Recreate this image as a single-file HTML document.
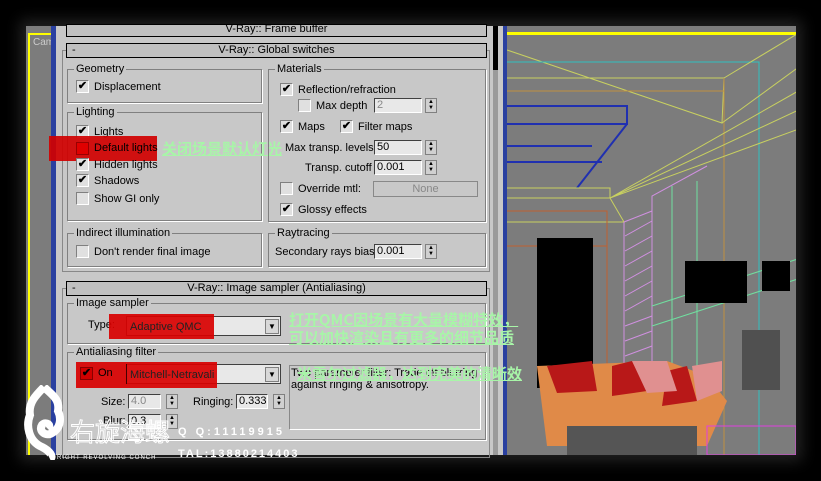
<!DOCTYPE html>
<html><head><meta charset="utf-8"><style>
*{margin:0;padding:0;box-sizing:border-box}
body{width:821px;height:481px;background:#000;position:relative;overflow:hidden;font-family:"Liberation Sans","Noto Sans CJK SC",sans-serif;font-size:11px;color:#000}
.a{position:absolute}
.grp{position:absolute;border:1px solid #808080;box-shadow:1px 1px 0 #fff}
.lbl{position:absolute;background:#c8c8c8;padding:0 2px;font-size:11px;top:-8px;left:6px;line-height:14px}
.t{position:absolute;font-size:11px;line-height:14px;white-space:nowrap}
.cb{position:absolute;width:13px;height:13px;background:#e0e0e0;border:1px solid;border-color:#808080 #fff #fff #808080;font-size:11px;line-height:11px;text-align:center;font-weight:bold}
.in{position:absolute;height:15px;background:#e8e8e8;border:1px solid;border-color:#404040 #fff #fff #404040;font-size:11px;line-height:13px;padding-left:2px}
.sp{position:absolute;width:12px;height:15px;background:#d0d0d0;border:1px solid #808080;font-size:6px;line-height:6px;text-align:center}
.hdr{position:absolute;left:66px;width:421px;height:15px;background:#c0c0c0;border:1px solid #000;font-size:11px;line-height:13px;text-align:center}
.cn{position:absolute;color:#a8f5a8;font-weight:bold;font-size:15px;line-height:16px;text-decoration:underline;white-space:nowrap;font-family:"Noto Sans CJK SC",sans-serif}
</style></head><body>
<div class="a" style="left:26px;top:26px;width:770px;height:429px;background:#7c7c7c;box-shadow:0 0 14px 6px #222"></div>
<div class="a" style="left:28px;top:33px;width:24px;height:422px;border-left:2px solid #ff0;border-top:2px solid #ff0"></div>
<div class="t" style="left:33px;top:36px;color:#ccc;font-size:10px">Cam</div>
<div class="a" style="left:51px;top:26px;width:5px;height:429px;background:#2a40a0"></div>
<div class="a" style="left:503px;top:26px;width:4px;height:429px;background:#2a40a0"></div>
<svg class="a" style="left:507px;top:26px" width="289" height="429">
<rect x="0" y="6" width="289" height="3" fill="#ff0"/>
<g fill="none" stroke-width="1">
<path d="M0 24 L215 97 L217 52 L0 52" stroke="#c8d060"/>
<path d="M0 36 L252 36 L252 429" stroke="#30c0c0"/>
<path d="M0 65 L217 65 M217 52 L217 429" stroke="#c09040"/>
<path d="M0 80 L120 80 L120 98 L0 98 M120 98 L70 162 M0 120 L85 120 M0 136 L95 136" stroke="#2030b0" stroke-width="2"/>
<path d="M215 97 L300 35 M217 52 L300 2 M103 172 L300 60 M103 172 L300 80 M103 172 L300 100 M0 162 L103 162 L103 172 L0 172 M103 172 L117 196 L0 196" stroke="#c8d060"/>
<path d="M0 185 L100 185 L100 420 M0 220 L100 220" stroke="#c06030"/>
<path d="M117 196 L117 350 L145 350 L145 170 L200 140 M145 170 L145 350 M145 185 L117 196" stroke="#d090e0"/>
<path d="M145 280 L300 230 M145 300 L300 250 M165 160 L165 400 M190 155 L190 350" stroke="#70e0a0"/>
</g>
<g stroke="#d090e0">
<line x1="118" y1="210" x2="145" y2="195"/><line x1="118" y1="225" x2="145" y2="210"/><line x1="118" y1="240" x2="145" y2="225"/><line x1="118" y1="255" x2="145" y2="240"/><line x1="118" y1="270" x2="145" y2="255"/><line x1="118" y1="285" x2="145" y2="270"/><line x1="118" y1="300" x2="145" y2="290"/><line x1="118" y1="315" x2="145" y2="305"/><line x1="118" y1="330" x2="145" y2="320"/></g>
<rect x="30" y="212" width="56" height="150" fill="#000"/>
<rect x="178" y="235" width="62" height="42" fill="#000"/>
<rect x="255" y="235" width="28" height="30" fill="#000"/>
<rect x="235" y="304" width="38" height="60" fill="#505050"/>
<path d="M30 340 L160 335 L200 350 L220 375 L200 420 L40 420 Z" fill="#e08a48"/>
<path d="M40 340 L85 335 L90 365 L50 367Z M105 340 L125 335 L140 365 L105 370 Z M160 345 L180 340 L190 375 L155 380Z" fill="#b81818"/>
<path d="M125 335 L160 335 L170 365 L140 367 Z M185 340 L215 335 L215 365 L190 375Z" fill="#e09090"/>
<rect x="60" y="400" width="130" height="29" fill="#555"/>
<path d="M200 400 L289 400 L289 429 L200 429 Z" fill="none" stroke="#e040e0"/>
</svg>
<div class="a" style="left:56px;top:26px;width:447px;height:429px;background:#c8c8c8"></div>
<div class="a" style="left:493px;top:26px;width:5px;height:429px;background:#9a9a9a"></div>
<div class="a" style="left:493px;top:26px;width:5px;height:44px;background:#000"></div>
<div class="hdr" style="top:24px;height:13px;line-height:8px">V-Ray:: Frame buffer</div>
<div class="a" style="left:62px;top:50px;width:428px;height:222px;border:1px solid #888"></div>
<div class="hdr" style="top:43px"><span style="position:absolute;left:5px">-</span>V-Ray:: Global switches</div>

<div class="grp" style="left:67px;top:69px;width:195px;height:34px"><span class="lbl">Geometry</span></div>
<div class="cb" style="left:76px;top:80px">✔</div><div class="t" style="left:94px;top:80px">Displacement</div>

<div class="grp" style="left:67px;top:112px;width:195px;height:109px"><span class="lbl">Lighting</span></div>
<div class="cb" style="left:76px;top:125px">✔</div><div class="t" style="left:94px;top:125px">Lights</div>
<div class="a" style="left:49px;top:136px;width:108px;height:25px;background:#d00000;opacity:.92"></div>
<div class="cb" style="left:76px;top:142px;background:#e00000;border-color:#900"></div><div class="t" style="left:94px;top:141px">Default lights</div>
<div class="cb" style="left:76px;top:158px">✔</div><div class="t" style="left:94px;top:158px">Hidden lights</div>
<div class="cb" style="left:76px;top:174px">✔</div><div class="t" style="left:94px;top:174px">Shadows</div>
<div class="cb" style="left:76px;top:192px"></div><div class="t" style="left:94px;top:192px">Show GI only</div>
<div class="cn" style="left:162px;top:141px">关闭场景默认灯光</div>

<div class="grp" style="left:268px;top:69px;width:218px;height:153px"><span class="lbl">Materials</span></div>
<div class="cb" style="left:280px;top:83px">✔</div><div class="t" style="left:298px;top:83px">Reflection/refraction</div>
<div class="cb" style="left:298px;top:99px"></div><div class="t" style="left:316px;top:99px">Max depth</div>
<div class="in" style="left:374px;top:98px;width:48px;color:#888">2</div><div class="sp" style="left:425px;top:98px">▲<br>▼</div>
<div class="cb" style="left:280px;top:120px">✔</div><div class="t" style="left:298px;top:120px">Maps</div>
<div class="cb" style="left:340px;top:120px">✔</div><div class="t" style="left:358px;top:120px">Filter maps</div>
<div class="t" style="left:285px;top:141px">Max transp. levels</div>
<div class="in" style="left:374px;top:140px;width:48px">50</div><div class="sp" style="left:425px;top:140px">▲<br>▼</div>
<div class="t" style="left:305px;top:161px">Transp. cutoff</div>
<div class="in" style="left:374px;top:160px;width:48px">0.001</div><div class="sp" style="left:425px;top:160px">▲<br>▼</div>
<div class="cb" style="left:280px;top:182px"></div><div class="t" style="left:298px;top:182px">Override mtl:</div>
<div class="a" style="left:373px;top:181px;width:105px;height:16px;border:1px solid #888;background:#c8c8c8;color:#888;text-align:center;font-size:11px;line-height:14px">None</div>
<div class="cb" style="left:280px;top:203px">✔</div><div class="t" style="left:298px;top:203px">Glossy effects</div>

<div class="grp" style="left:67px;top:233px;width:195px;height:34px"><span class="lbl">Indirect illumination</span></div>
<div class="cb" style="left:76px;top:245px"></div><div class="t" style="left:94px;top:245px">Don't render final image</div>
<div class="grp" style="left:268px;top:233px;width:218px;height:34px"><span class="lbl">Raytracing</span></div>
<div class="t" style="left:275px;top:245px">Secondary rays bias</div>
<div class="in" style="left:374px;top:244px;width:48px">0.001</div><div class="sp" style="left:425px;top:244px">▲<br>▼</div>

<div class="a" style="left:62px;top:288px;width:428px;height:170px;border:1px solid #888"></div>
<div class="hdr" style="top:281px"><span style="position:absolute;left:5px">-</span>V-Ray:: Image sampler (Antialiasing)</div>
<div class="grp" style="left:67px;top:303px;width:419px;height:41px"><span class="lbl">Image sampler</span></div>
<div class="t" style="left:88px;top:318px">Type:</div>
<div class="a" style="left:126px;top:316px;width:155px;height:20px;background:#e8e8e8;border:1px solid #404040"></div>
<div class="a" style="left:109px;top:314px;width:105px;height:25px;background:#d80000;opacity:.92"></div>
<div class="t" style="left:130px;top:320px;color:#222">Adaptive QMC</div>
<div class="sp" style="left:265px;top:319px;width:14px;font-size:8px;line-height:13px;background:#d8d8d8">▼</div>

<div class="grp" style="left:67px;top:352px;width:419px;height:88px"><span class="lbl">Antialiasing filter</span></div>
<div class="a" style="left:126px;top:364px;width:155px;height:20px;background:#e8e8e8;border:1px solid #404040"></div>
<div class="a" style="left:76px;top:362px;width:141px;height:26px;background:#d80000;opacity:.92"></div>
<div class="cb" style="left:80px;top:367px;background:#d00000;border-color:#800">✔</div><div class="t" style="left:98px;top:366px">On</div>
<div class="a" style="left:126px;top:364px;width:1px;height:20px;background:#400"></div>
<div class="t" style="left:130px;top:368px;color:#222">Mitchell-Netravali</div>
<div class="sp" style="left:265px;top:367px;width:14px;font-size:8px;line-height:13px;background:#d8d8d8">▼</div>
<div class="a" style="left:289px;top:365px;width:192px;height:65px;border:1px solid #888;border-right-color:#fff;border-bottom-color:#fff"></div>
<div class="t" style="left:291px;top:367px;font-size:11px;line-height:12px">Two parameter filter: Trade off blurring<br>against ringing &amp; anisotropy.</div>
<div class="t" style="left:101px;top:395px">Size:</div>
<div class="in" style="left:128px;top:394px;width:33px;color:#888">4.0</div><div class="sp" style="left:166px;top:394px">▲<br>▼</div>
<div class="t" style="left:193px;top:395px">Ringing:</div>
<div class="in" style="left:236px;top:394px;width:32px">0.333</div><div class="sp" style="left:273px;top:394px">▲<br>▼</div>
<div class="t" style="left:103px;top:414px">Blur:</div>
<div class="in" style="left:128px;top:414px;width:33px">0.3</div><div class="sp" style="left:166px;top:414px">▲<br>▼</div>

<div class="cn" style="left:289px;top:312px">打开QMC因场景有大量模糊特效，</div>
<div class="cn" style="left:289px;top:330px">可以加快渲染且有更多的细节品质</div>
<div class="cn" style="left:297px;top:366px">米雪尔过滤器，达到完美的清晰效</div>

<svg class="a" style="left:22px;top:385px" width="45" height="75"><path d="M22 2 C30 10 38 14 36 26 C40 34 38 44 30 48 C24 52 16 46 20 40 C24 36 30 40 26 44 M22 2 C14 10 6 18 8 30 C4 40 6 56 20 62 C28 66 32 72 28 74" fill="none" stroke="#fff" stroke-width="8"/></svg>
<div class="t" style="left:70px;top:416px;font-size:25px;line-height:30px;color:transparent;-webkit-text-stroke:1px #fff;font-family:'Noto Sans CJK SC',sans-serif">右旋海螺</div>
<div class="t" style="left:178px;top:425px;color:#fff;font-size:11px;font-weight:bold;letter-spacing:3px">Q Q:11119915</div>
<div class="t" style="left:178px;top:447px;color:#fff;font-size:11px;font-weight:bold;letter-spacing:2px">TAL:13880214403</div>
<div class="t" style="left:57px;top:451px;color:#fff;font-size:6px;letter-spacing:1px">RIGHT REVOLVING CONCH</div>
</body></html>
